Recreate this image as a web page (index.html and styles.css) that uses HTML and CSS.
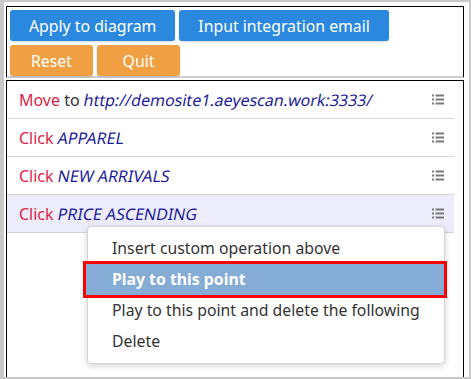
FILE: index.html
```html
<!DOCTYPE html>
<html lang="en">
<head>
    <meta charset="UTF-8">
    <title>Operations</title>
    <link rel="stylesheet" href="styles.css">
</head>
<body>

    <div class="frame">
        <div class="toolbar">
            <div class="btn-row">
                <button class="btn btn-blue">Apply to diagram</button>
                <button class="btn btn-blue">Input integration email</button>
            </div>
            <div class="btn-row">
                <button class="btn btn-orange">Reset</button>
                <button class="btn btn-orange">Quit</button>
            </div>
        </div>

        <div class="op-list">
            <div class="op-row">
                <span class="op-text"><span class="verb">Move</span> <span class="prep">to</span> <span class="target">http://demosite1.aeyescan.work:3333/</span></span>
                <svg class="op-icon" width="12" height="11" viewBox="0 0 12 11"><g fill="#7a7a7a"><rect x="0" y="0.5" width="2" height="2"/><rect x="3.5" y="0.5" width="8.5" height="2"/><rect x="0" y="4.5" width="2" height="2"/><rect x="3.5" y="4.5" width="8.5" height="2"/><rect x="0" y="8.5" width="2" height="2"/><rect x="3.5" y="8.5" width="8.5" height="2"/></g></svg>
            </div>
            <div class="op-row">
                <span class="op-text"><span class="verb">Click</span> <span class="target">APPAREL</span></span>
                <svg class="op-icon" width="12" height="11" viewBox="0 0 12 11"><g fill="#7a7a7a"><rect x="0" y="0.5" width="2" height="2"/><rect x="3.5" y="0.5" width="8.5" height="2"/><rect x="0" y="4.5" width="2" height="2"/><rect x="3.5" y="4.5" width="8.5" height="2"/><rect x="0" y="8.5" width="2" height="2"/><rect x="3.5" y="8.5" width="8.5" height="2"/></g></svg>
            </div>
            <div class="op-row">
                <span class="op-text"><span class="verb">Click</span> <span class="target">NEW ARRIVALS</span></span>
                <svg class="op-icon" width="12" height="11" viewBox="0 0 12 11"><g fill="#7a7a7a"><rect x="0" y="0.5" width="2" height="2"/><rect x="3.5" y="0.5" width="8.5" height="2"/><rect x="0" y="4.5" width="2" height="2"/><rect x="3.5" y="4.5" width="8.5" height="2"/><rect x="0" y="8.5" width="2" height="2"/><rect x="3.5" y="8.5" width="8.5" height="2"/></g></svg>
            </div>
            <div class="op-row selected">
                <span class="op-text"><span class="verb">Click</span> <span class="target">PRICE ASCENDING</span></span>
                <svg class="op-icon" width="12" height="11" viewBox="0 0 12 11"><g fill="#7a7a7a"><rect x="0" y="0.5" width="2" height="2"/><rect x="3.5" y="0.5" width="8.5" height="2"/><rect x="0" y="4.5" width="2" height="2"/><rect x="3.5" y="4.5" width="8.5" height="2"/><rect x="0" y="8.5" width="2" height="2"/><rect x="3.5" y="8.5" width="8.5" height="2"/></g></svg>
            </div>
        </div>

        <!-- context menu for the selected row -->
        <div class="context-menu">
            <div class="menu-item">Insert custom operation above</div>
            <div class="menu-item active">Play to this point</div>
            <div class="menu-item">Play to this point and delete the following</div>
            <div class="menu-item">Delete</div>
        </div>
    </div>

</body>
</html>
```

FILE: styles.css
```css
* {
    box-sizing: border-box;
}

body {
    margin: 0;
    font-family: 'Noto Sans', 'Open Sans', sans-serif;
    background: #ffffff;
}

.frame {
    position: relative;
    width: 471px;
    height: 379px;
    border: 2px solid #c8c8c8;
    border-left-width: 4px;
    padding: 4px 5px 0 2px;
    overflow: hidden;
}

.toolbar {
    border: 1px solid #000;
    border-bottom: 2px solid #cfcfcf;
    padding: 3px 3px 0 3px;
    display: flex;
    flex-direction: column;
    gap: 4px;
}

.btn-row {
    display: flex;
    gap: 4px;
}

.btn {
    font-family: inherit;
    font-size: 15.8px;
    color: #fff;
    border: none;
    border-radius: 3px;
    height: 31px;
    padding: 0 19px;
    cursor: pointer;
    box-shadow: 0 1px 2px rgba(0, 0, 0, 0.15);
}

.btn-blue {
    background: #2a89de;
}

.btn-orange {
    background: #f0a042;
    min-width: 83px;
}

.op-list {
    margin-top: 2px;
    border: 1px solid #000;
    border-bottom: none;
    height: 300px;
    padding-right: 9px;
}

.op-row {
    height: 38px;
    display: flex;
    align-items: center;
    justify-content: space-between;
    padding: 0 10px 0 12px;
    border-bottom: 1px solid #d4d4d4;
    font-size: 16px;
}

.op-row.selected {
    background: #ececfa;
}

.verb {
    color: #dc1f48;
}

.prep {
    color: #333;
}

/* regular glyphs slanted: the italic face here runs too narrow */
.target {
    display: inline-block;
    color: #1c1c9a;
    transform: skewX(-11deg);
}

.op-icon {
    flex-shrink: 0;
}

.context-menu {
    position: absolute;
    left: 83px;
    top: 224px;
    width: 358px;
    height: 138px;
    background: #fff;
    border: 1px solid #d6d6d6;
    border-radius: 4px;
    box-shadow: 0 2px 6px rgba(0, 0, 0, 0.18);
    padding: 6px 0;
}

.menu-item {
    height: 31px;
    line-height: 31px;
    padding-left: 24px;
    font-size: 15.8px;
    color: #333;
    white-space: nowrap;
}

.menu-item.active {
    margin-left: -2px;
    padding-left: 26px;
    background: #84acd5;
    color: #fff;
    font-weight: bold;
    outline: 3px solid #ff0000;
}
```
